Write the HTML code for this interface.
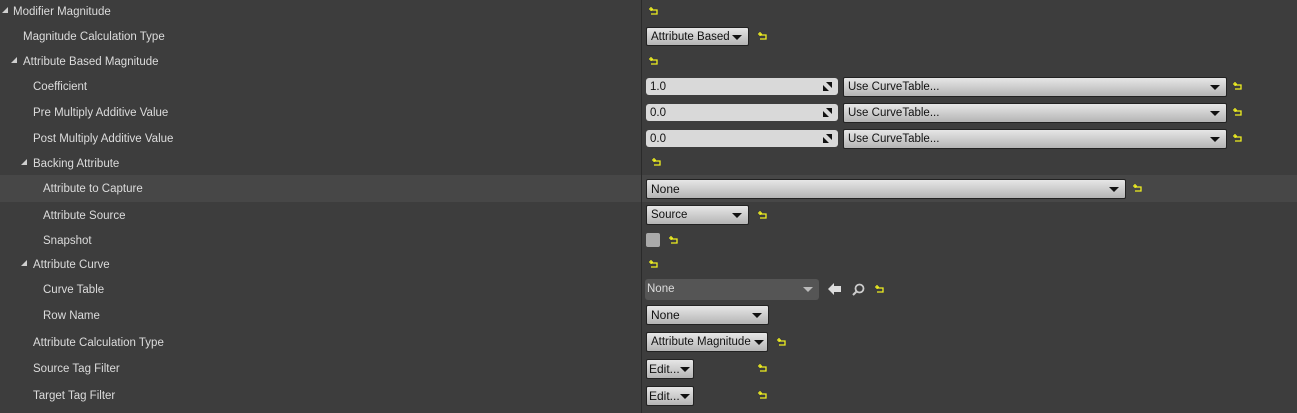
<!DOCTYPE html>
<html><head><style>
body{margin:0;width:1297px;height:413px;background:#3d3d3d;font-family:"Liberation Sans",Arial,sans-serif;font-size:11.5px;color:#dcdcdc;position:relative;overflow:hidden}
.a{position:absolute}
.l{position:absolute;white-space:nowrap;line-height:14px}
.tri{position:absolute;width:0;height:0;border-left:6px solid transparent;border-bottom:6px solid #cfcfcf}
.btn{position:absolute;box-sizing:border-box;border:1px solid #222;border-radius:2px;background:linear-gradient(#e6e6e6,#d0d0d0 45%,#b4b4b4);color:#111;line-height:18px;padding-left:4px;white-space:nowrap;font-size:11.5px}
.btn .dd{position:absolute;right:6px;top:7px;width:0;height:0;border-left:5px solid transparent;border-right:5px solid transparent;border-top:5px solid #111}
.num{position:absolute;box-sizing:border-box;background:#d9d9d9;border-radius:3px;color:#111;line-height:18px;padding-left:4px;font-size:11.5px}
.num .sp{position:absolute;right:6px;top:4px;width:9px;height:9px}
.r{position:absolute;width:9px;height:8px}
</style></head><body>
<div class="a" style="left:0;top:175px;width:1297px;height:27px;background:#474747"></div>
<div class="a" style="left:641px;top:0;width:1px;height:413px;background:#2a2a2a"></div>

<div class="tri" style="left:2px;top:7px"></div><div class="l" style="left:13px;top:5px">Modifier Magnitude</div>
<div class="l" style="left:23px;top:30px">Magnitude Calculation Type</div>
<div class="tri" style="left:11px;top:57px"></div><div class="l" style="left:23px;top:55px">Attribute Based Magnitude</div>
<div class="l" style="left:33px;top:80px">Coefficient</div>
<div class="l" style="left:33px;top:106px">Pre Multiply Additive Value</div>
<div class="l" style="left:33px;top:132px">Post Multiply Additive Value</div>
<div class="tri" style="left:21px;top:159px"></div><div class="l" style="left:33px;top:157px">Backing Attribute</div>
<div class="l" style="left:43px;top:182px">Attribute to Capture</div>
<div class="l" style="left:43px;top:209px">Attribute Source</div>
<div class="l" style="left:43px;top:234px">Snapshot</div>
<div class="tri" style="left:21px;top:260px"></div><div class="l" style="left:33px;top:258px">Attribute Curve</div>
<div class="l" style="left:43px;top:283px">Curve Table</div>
<div class="l" style="left:43px;top:309px">Row Name</div>
<div class="l" style="left:33px;top:336px">Attribute Calculation Type</div>
<div class="l" style="left:33px;top:362px">Source Tag Filter</div>
<div class="l" style="left:33px;top:389px">Target Tag Filter</div>

<div class="btn" style="left:646px;top:27px;width:103px;height:19px">Attribute Based<span class="dd"></span></div>

<div class="num" style="left:646px;top:78px;width:192px;height:17px">1.0<svg class="sp" viewBox="0 0 9 9"><path d="M9 0V6L3 0ZM0 9V3L6 9Z" fill="#111"/></svg></div>
<div class="num" style="left:646px;top:104px;width:192px;height:17px">0.0<svg class="sp" viewBox="0 0 9 9"><path d="M9 0V6L3 0ZM0 9V3L6 9Z" fill="#111"/></svg></div>
<div class="num" style="left:646px;top:130px;width:192px;height:17px">0.0<svg class="sp" viewBox="0 0 9 9"><path d="M9 0V6L3 0ZM0 9V3L6 9Z" fill="#111"/></svg></div>
<div class="btn" style="left:843px;top:77px;width:384px;height:20px">Use CurveTable...<span class="dd"></span></div>
<div class="btn" style="left:843px;top:103px;width:384px;height:20px">Use CurveTable...<span class="dd"></span></div>
<div class="btn" style="left:843px;top:129px;width:384px;height:20px">Use CurveTable...<span class="dd"></span></div>

<div class="btn" style="left:646px;top:179px;width:480px;height:20px;font-size:12px">None<span class="dd"></span></div>
<div class="btn" style="left:646px;top:205px;width:103px;height:20px">Source<span class="dd"></span></div>
<div class="a" style="left:646px;top:233px;width:14px;height:14px;background:#aaa;border-radius:2px"></div>
<div class="a" style="left:645px;top:279px;width:174px;height:21px;background:#555;border-radius:3px;color:#ddd;line-height:21px;padding-left:2px;box-sizing:border-box">None<span style="position:absolute;right:6px;top:8px;border-left:5px solid transparent;border-right:5px solid transparent;border-top:5px solid #bbb"></span></div>
<svg class="a" style="left:828px;top:283px" width="14" height="12" viewBox="0 0 14 12"><path d="M0 6L6 0V3H13V9H6V12Z" fill="#ddd"/></svg>
<svg class="a" style="left:852px;top:283px" width="13" height="13" viewBox="0 0 13 13"><circle cx="7.5" cy="5.5" r="4" fill="none" stroke="#ccc" stroke-width="1.8"/><path d="M5 8L1 12" stroke="#ccc" stroke-width="2"/></svg>
<div class="btn" style="left:646px;top:305px;width:123px;height:20px;font-size:12px">None<span class="dd"></span></div>
<div class="btn" style="left:646px;top:332px;width:122px;height:20px">Attribute Magnitude<span class="dd" style="right:3px"></span></div>
<div class="btn" style="left:646px;top:359px;width:48px;height:20px;padding-left:2px;font-size:12px">Edit...<span class="dd" style="right:3px"></span></div>
<div class="btn" style="left:646px;top:386px;width:48px;height:20px;padding-left:2px;font-size:12px">Edit...<span class="dd" style="right:3px"></span></div>

<svg width="0" height="0" style="position:absolute"><defs><symbol id="rs" viewBox="0 0 9 8"><path d="M2 0V4M0 2H4M2 3H8V7H2" fill="none" stroke="#f0f020" stroke-width="1.3"/></symbol></defs></svg>
<svg class="r" style="left:649px;top:7px"><use href="#rs"/></svg>
<svg class="r" style="left:758px;top:32px"><use href="#rs"/></svg>
<svg class="r" style="left:649px;top:57px"><use href="#rs"/></svg>
<svg class="r" style="left:1233px;top:82px"><use href="#rs"/></svg>
<svg class="r" style="left:1233px;top:108px"><use href="#rs"/></svg>
<svg class="r" style="left:1233px;top:134px"><use href="#rs"/></svg>
<svg class="r" style="left:652px;top:158px"><use href="#rs"/></svg>
<svg class="r" style="left:1133px;top:184px"><use href="#rs"/></svg>
<svg class="r" style="left:758px;top:211px"><use href="#rs"/></svg>
<svg class="r" style="left:669px;top:236px"><use href="#rs"/></svg>
<svg class="r" style="left:649px;top:260px"><use href="#rs"/></svg>
<svg class="r" style="left:875px;top:285px"><use href="#rs"/></svg>
<svg class="r" style="left:777px;top:338px"><use href="#rs"/></svg>
<svg class="r" style="left:758px;top:364px"><use href="#rs"/></svg>
<svg class="r" style="left:758px;top:391px"><use href="#rs"/></svg>
</body></html>
